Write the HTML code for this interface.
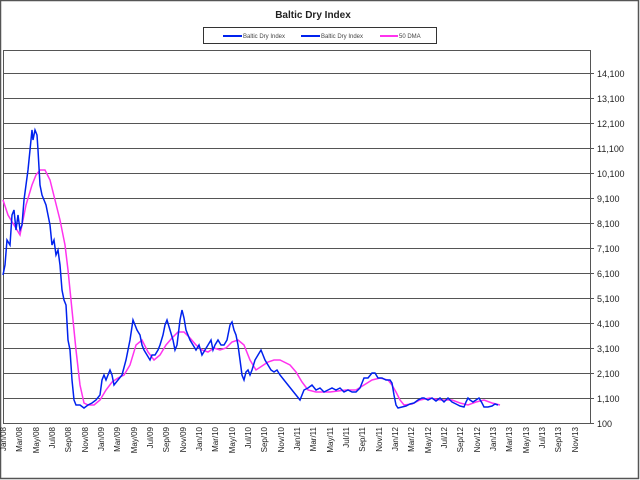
<!DOCTYPE html>
<html><head><meta charset="utf-8"><style>
html,body{margin:0;padding:0;background:#fff;}
svg{display:block;font-family:"Liberation Sans",Arial,sans-serif;}
</style></head><body>
<svg width="640" height="480" viewBox="0 0 640 480" xmlns="http://www.w3.org/2000/svg">
<rect x="0" y="0" width="640" height="480" fill="#fff"/>
<rect x="0.5" y="0.5" width="638" height="478" fill="none" stroke="#555" stroke-width="1.5"/>
<text x="313" y="18" font-size="10" font-weight="bold" text-anchor="middle" fill="#222">Baltic Dry Index</text>
<rect x="203.5" y="27.5" width="233" height="16" fill="#fff" stroke="#333" stroke-width="1"/>
<line x1="223" y1="36" x2="242" y2="36" stroke="#0022ee" stroke-width="2"/>
<text x="243" y="38" font-size="6" fill="#444">Baltic Dry Index</text>
<line x1="301" y1="36" x2="320" y2="36" stroke="#0022ee" stroke-width="2"/>
<text x="321" y="38" font-size="6" fill="#444">Baltic Dry Index</text>
<line x1="380" y1="36" x2="398" y2="36" stroke="#ff33ee" stroke-width="2"/>
<text x="399" y="38" font-size="6" fill="#444">50 DMA</text>
<rect x="3.5" y="50.5" width="587" height="373" fill="#fff" stroke="#555" stroke-width="1"/>
<g stroke="#555" stroke-width="1">
<line x1="3" y1="73.5" x2="594" y2="73.5"/><line x1="3" y1="98.5" x2="594" y2="98.5"/>
<line x1="3" y1="123.5" x2="594" y2="123.5"/><line x1="3" y1="148.5" x2="594" y2="148.5"/>
<line x1="3" y1="173.5" x2="594" y2="173.5"/><line x1="3" y1="198.5" x2="594" y2="198.5"/>
<line x1="3" y1="223.5" x2="594" y2="223.5"/><line x1="3" y1="248.5" x2="594" y2="248.5"/>
<line x1="3" y1="273.5" x2="594" y2="273.5"/><line x1="3" y1="298.5" x2="594" y2="298.5"/>
<line x1="3" y1="323.5" x2="594" y2="323.5"/><line x1="3" y1="348.5" x2="594" y2="348.5"/>
<line x1="3" y1="373.5" x2="594" y2="373.5"/><line x1="3" y1="398.5" x2="594" y2="398.5"/>
<line x1="590" y1="423.5" x2="594" y2="423.5"/>
</g>
<g font-size="9" fill="#222">
<text x="597" y="77">14,100</text><text x="597" y="102">13,100</text><text x="597" y="127">12,100</text>
<text x="597" y="152">11,100</text><text x="597" y="177">10,100</text><text x="597" y="202">9,100</text>
<text x="597" y="227">8,100</text><text x="597" y="252">7,100</text><text x="597" y="277">6,100</text>
<text x="597" y="302">5,100</text><text x="597" y="327">4,100</text><text x="597" y="352">3,100</text>
<text x="597" y="377">2,100</text><text x="597" y="402">1,100</text><text x="597" y="427">100</text>
</g>
<polyline fill="none" stroke="#ff33ee" stroke-width="1.5" points="3,200 8,215 14,225 20,235 26,205 32,185 36,175 40,170 45,170 50,180 55,200 60,220 65,245 68,270 72,310 76,350 80,385 84,403 88,405 94,405 100,400 106,390 112,382 118,378 124,375 130,365 136,345 142,340 148,352 154,360 160,355 166,345 172,338 178,332 184,332 190,338 196,345 202,350 208,352 214,348 220,350 226,348 232,342 238,340 244,345 250,360 256,370 262,366 268,362 274,360 280,360 290,365 296,372 302,382 308,390 316,392 330,392 346,390 356,390 364,385 372,380 380,378 388,380 392,385 396,392 400,400 404,405 412,404 420,400 430,398 440,400 452,400 460,403 468,405 476,402 484,400 492,403 500,405"/>
<polyline fill="none" stroke="#0022ee" stroke-width="1.5" points="3,275 5,265 7,240 10,245 12,215 14,210 16,230 18,215 20,230 22,225 24,200 26,185 28,170 30,150 32,130 33,140 35,130 37,135 38,150 40,185 42,195 44,200 46,205 48,215 50,225 52,245 54,240 56,255 58,250 60,265 62,290 64,300 66,305 68,340 70,350 72,380 74,400 76,405 80,405 84,408 88,405 92,403 96,400 100,395 102,380 104,375 106,380 110,370 112,375 114,385 118,380 122,375 126,360 128,350 130,340 133,320 135,325 137,330 140,335 142,345 144,350 147,355 150,360 152,355 155,355 158,350 160,345 163,335 165,325 167,320 170,330 173,340 175,350 177,345 180,320 182,310 184,318 186,330 188,335 190,340 193,345 196,350 199,345 202,355 205,350 208,345 211,340 213,350 215,345 218,340 221,345 224,345 227,340 230,325 232,322 234,330 236,335 238,345 240,360 242,375 244,380 246,372 248,370 250,375 252,370 255,360 258,355 261,350 263,355 265,360 268,365 271,370 274,372 277,370 280,375 284,380 288,385 292,390 296,395 300,400 302,395 304,390 308,388 312,385 316,390 320,388 324,392 328,390 332,388 336,390 340,388 344,392 348,390 352,392 356,392 360,388 362,383 364,378 368,378 372,373 375,373 378,378 382,378 386,380 390,380 392,383 394,395 396,405 398,408 402,407 406,406 410,404 414,403 418,400 422,398 424,398 428,400 432,398 436,401 440,398 444,402 448,398 452,402 456,404 460,406 464,407 466,402 468,398 470,400 473,402 476,400 479,398 482,403 484,407 488,407 492,406 495,404 498,405"/>
<g font-size="8" fill="#222" id="xl"></g>
<g font-size="8" fill="#222">
<text transform="translate(6,427) rotate(-90)" text-anchor="end">Jan/08</text>
<text transform="translate(22,427) rotate(-90)" text-anchor="end">Mar/08</text>
<text transform="translate(39,427) rotate(-90)" text-anchor="end">May/08</text>
<text transform="translate(55,427) rotate(-90)" text-anchor="end">Jul/08</text>
<text transform="translate(71,427) rotate(-90)" text-anchor="end">Sep/08</text>
<text transform="translate(88,427) rotate(-90)" text-anchor="end">Nov/08</text>
<text transform="translate(104,427) rotate(-90)" text-anchor="end">Jan/09</text>
<text transform="translate(120,427) rotate(-90)" text-anchor="end">Mar/09</text>
<text transform="translate(137,427) rotate(-90)" text-anchor="end">May/09</text>
<text transform="translate(153,427) rotate(-90)" text-anchor="end">Jul/09</text>
<text transform="translate(169,427) rotate(-90)" text-anchor="end">Sep/09</text>
<text transform="translate(186,427) rotate(-90)" text-anchor="end">Nov/09</text>
<text transform="translate(202,427) rotate(-90)" text-anchor="end">Jan/10</text>
<text transform="translate(218,427) rotate(-90)" text-anchor="end">Mar/10</text>
<text transform="translate(235,427) rotate(-90)" text-anchor="end">May/10</text>
<text transform="translate(251,427) rotate(-90)" text-anchor="end">Jul/10</text>
<text transform="translate(267,427) rotate(-90)" text-anchor="end">Sep/10</text>
<text transform="translate(284,427) rotate(-90)" text-anchor="end">Nov/10</text>
<text transform="translate(300,427) rotate(-90)" text-anchor="end">Jan/11</text>
<text transform="translate(316,427) rotate(-90)" text-anchor="end">Mar/11</text>
<text transform="translate(333,427) rotate(-90)" text-anchor="end">May/11</text>
<text transform="translate(349,427) rotate(-90)" text-anchor="end">Jul/11</text>
<text transform="translate(365,427) rotate(-90)" text-anchor="end">Sep/11</text>
<text transform="translate(382,427) rotate(-90)" text-anchor="end">Nov/11</text>
<text transform="translate(398,427) rotate(-90)" text-anchor="end">Jan/12</text>
<text transform="translate(414,427) rotate(-90)" text-anchor="end">Mar/12</text>
<text transform="translate(431,427) rotate(-90)" text-anchor="end">May/12</text>
<text transform="translate(447,427) rotate(-90)" text-anchor="end">Jul/12</text>
<text transform="translate(463,427) rotate(-90)" text-anchor="end">Sep/12</text>
<text transform="translate(480,427) rotate(-90)" text-anchor="end">Nov/12</text>
<text transform="translate(496,427) rotate(-90)" text-anchor="end">Jan/13</text>
<text transform="translate(512,427) rotate(-90)" text-anchor="end">Mar/13</text>
<text transform="translate(529,427) rotate(-90)" text-anchor="end">May/13</text>
<text transform="translate(545,427) rotate(-90)" text-anchor="end">Jul/13</text>
<text transform="translate(561,427) rotate(-90)" text-anchor="end">Sep/13</text>
<text transform="translate(578,427) rotate(-90)" text-anchor="end">Nov/13</text>
</g>
</svg>
</body></html>
